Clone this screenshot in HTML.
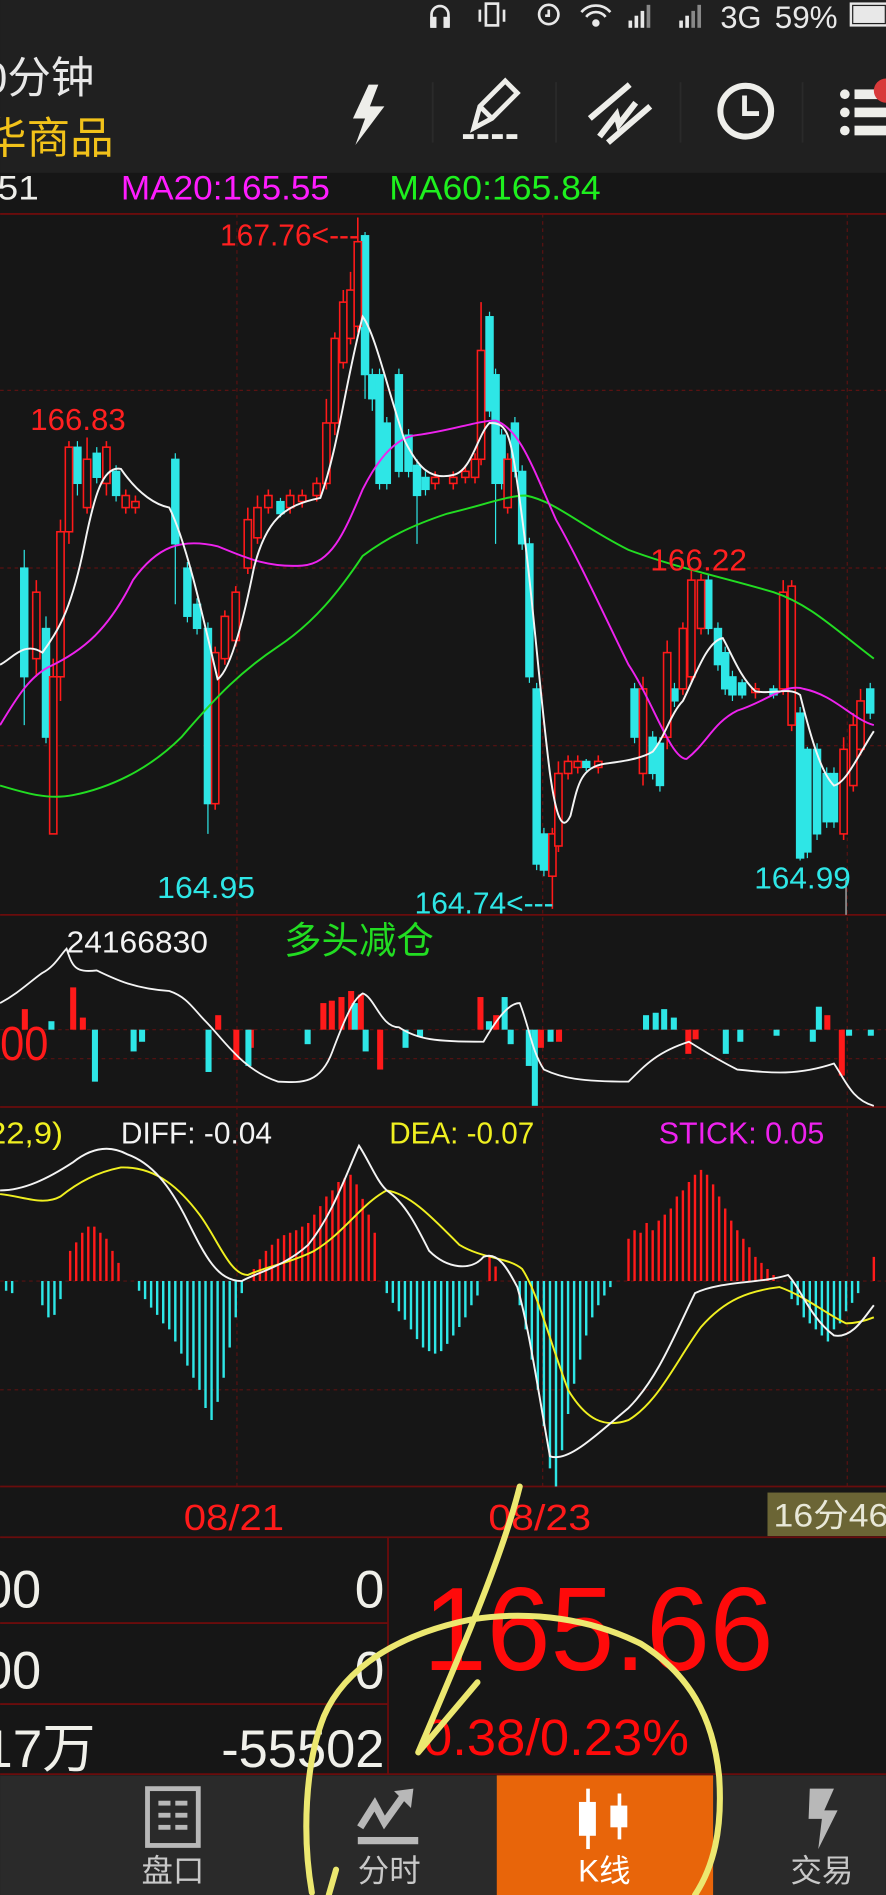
<!DOCTYPE html>
<html><head><meta charset="utf-8"><style>
html,body{margin:0;padding:0;background:#161616;width:886px;height:1895px;overflow:hidden}
svg{display:block}
text{font-family:"Liberation Sans","Noto Sans CJK SC",sans-serif}
</style></head><body>
<svg width="886" height="1895" viewBox="0 0 733 1568" xmlns="http://www.w3.org/2000/svg">
<rect x="0" y="0" width="733" height="1568" fill="#161616"/>
<rect x="0" y="0" width="733" height="143" fill="#202020"/>
<g fill="none" stroke="#e8e8e8" stroke-width="2.2">
<path d="M357 22 v-10 a7 7 0 0 1 14 0 v10"/><rect x="357" y="15" width="3" height="7" fill="#e8e8e8"/><rect x="368" y="15" width="3" height="7" fill="#e8e8e8"/>
<rect x="402" y="3" width="10" height="18"/><path d="M397 8 v10 M417 8 v10"/>
<circle cx="454" cy="12" r="8"/><path d="M454 8 v5 h-3"/>
<path d="M481 10 a16 16 0 0 1 24 0 M485 14 a10 10 0 0 1 16 0"/><circle cx="493" cy="19" r="2" fill="#e8e8e8"/>
</g>
<g fill="#e8e8e8"><rect x="520" y="17" width="3" height="6"/><rect x="525" y="13" width="3" height="10"/><rect x="530" y="9" width="3" height="14"/><rect x="535" y="4" width="3" height="19" fill="#888"/>
<rect x="562" y="17" width="3" height="6"/><rect x="567" y="13" width="3" height="10"/><rect x="572" y="9" width="3" height="14" fill="#888"/><rect x="577" y="4" width="3" height="19" fill="#888"/></g>
<text x="596" y="23" fill="#e8e8e8" font-size="26" textLength="34" lengthAdjust="spacingAndGlyphs">3G</text>
<text x="641" y="23" fill="#e8e8e8" font-size="26" textLength="52" lengthAdjust="spacingAndGlyphs">59%</text>
<rect x="704" y="3" width="30" height="18" fill="none" stroke="#e8e8e8" stroke-width="2"/><rect x="706" y="5" width="26" height="14" fill="#e8e8e8"/>
<text x="-14" y="77" fill="#e8e8e8" font-size="36">0分钟</text>
<text x="-14" y="127" fill="#f2c21a" font-size="36">华商品</text>
<path d="M305 70 L292 98 H302 L294 120 L318 88 H306 L313 70 Z" fill="#eeeeea"/>
<g stroke="#2a2a2a" stroke-width="1.5"><path d="M358 68 V118 M460 68 V118 M563 68 V118 M664 68 V118"/></g>
<g fill="none" stroke="#eeeeea" stroke-width="4">
<path d="M392 106 L397 88 L418 67 L428 77 L407 98 Z M397 88 L407 98"/>
</g>
<g fill="#eeeeea"><rect x="383" y="111" width="9" height="4"/><rect x="395" y="111" width="9" height="4"/><rect x="407" y="111" width="9" height="4"/><rect x="419" y="111" width="9" height="4"/></g>
<g fill="none" stroke="#eeeeea" stroke-width="5"><path d="M488 98 L521 70 M503 118 L538 88 M496 113 L510 95 L512 103 L526 85"/></g>
<circle cx="617" cy="92" r="21" fill="none" stroke="#eeeeea" stroke-width="5"/><path d="M616 79 V94 H628" fill="none" stroke="#eeeeea" stroke-width="4"/>
<g fill="#eeeeea"><circle cx="699" cy="78" r="4"/><circle cx="699" cy="93" r="4"/><circle cx="699" cy="108" r="4"/><rect x="707" y="74" width="30" height="8"/><rect x="707" y="89" width="30" height="8"/><rect x="707" y="104" width="30" height="8"/></g>
<circle cx="733" cy="75" r="10" fill="#d83a3a"/>
<text x="-2" y="165" fill="#eeeeea" font-size="28" textLength="34" lengthAdjust="spacingAndGlyphs">51</text>
<text x="100" y="165" fill="#ff1cff" font-size="28" textLength="173" lengthAdjust="spacingAndGlyphs">MA20:165.55</text>
<text x="322" y="165" fill="#1ef01e" font-size="28" textLength="175" lengthAdjust="spacingAndGlyphs">MA60:165.84</text>
<g stroke="#6a0c0c" stroke-width="1.5"><path d="M0 177 H733 M0 757 H733 M0 916 H733 M0 1230 H733 M0 1272 H733 M0 1468 H733 M321 1272 V1468 M0 1343 H321 M0 1410 H321"/></g>
<g stroke="#5a1212" stroke-width="1" stroke-dasharray="3 3"><path d="M196 177 V1230 M449 177 V1230 M701 177 V1230 M0 323 H733 M0 470 H733 M0 617 H733 M0 852 H733 M0 876 H733 M0 1060 H733 M0 1150 H733"/></g>
<g fill="#2ee6e6" stroke="#2ee6e6" stroke-width="1">
<path d="M20 455V600M38 510V615M64 365V410M80 370V400M96 385V415M145 375V500M155 465V515M163 495V525M172 515V690M232 412V428M302 192V330M308 305V340M314 305V405M320 345V405M330 305V395M338 355V395M345 380V450M352 390V410M405 258V345M410 305V450M415 355V405M426 345V395M432 385V455M438 445V565M444 565V720M450 685V725M485 628V638M525 565V615M540 605V645M546 610V655M558 565V585M586 475V525M594 515V555M600 535V575M606 555V580M614 562V578M640 567V578M662 585V712M668 618V710M676 615V695M684 635V685M690 635V685M720 565V595"/>
<rect x="17" y="470" width="6" height="90"/><rect x="35" y="520" width="6" height="90"/><rect x="61" y="370" width="6" height="30"/><rect x="77" y="375" width="6" height="20"/><rect x="93" y="390" width="6" height="20"/><rect x="142" y="380" width="6" height="70"/><rect x="152" y="470" width="6" height="40"/><rect x="160" y="500" width="6" height="20"/><rect x="169" y="520" width="6" height="145"/><rect x="229" y="415" width="6" height="10"/><rect x="299" y="195" width="6" height="115"/><rect x="305" y="310" width="6" height="20"/><rect x="311" y="310" width="6" height="90"/><rect x="317" y="350" width="6" height="50"/><rect x="327" y="310" width="6" height="80"/><rect x="335" y="360" width="6" height="30"/><rect x="342" y="385" width="6" height="25"/><rect x="349" y="395" width="6" height="10"/><rect x="402" y="262" width="6" height="78"/><rect x="407" y="310" width="6" height="90"/><rect x="412" y="360" width="6" height="40"/><rect x="423" y="350" width="6" height="40"/><rect x="429" y="390" width="6" height="60"/><rect x="435" y="450" width="6" height="110"/><rect x="441" y="570" width="6" height="145"/><rect x="447" y="690" width="6" height="30"/><rect x="482" y="630" width="6" height="5"/><rect x="522" y="570" width="6" height="40"/><rect x="537" y="610" width="6" height="30"/><rect x="543" y="615" width="6" height="35"/><rect x="555" y="570" width="6" height="10"/><rect x="583" y="480" width="6" height="40"/><rect x="591" y="520" width="6" height="30"/><rect x="597" y="540" width="6" height="30"/><rect x="603" y="560" width="6" height="15"/><rect x="611" y="565" width="6" height="10"/><rect x="637" y="570" width="6" height="5"/><rect x="659" y="590" width="6" height="120"/><rect x="665" y="620" width="6" height="85"/><rect x="673" y="620" width="6" height="70"/><rect x="681" y="640" width="6" height="40"/><rect x="687" y="640" width="6" height="40"/><rect x="717" y="570" width="6" height="20"/>
</g>
<g fill="#161616" stroke="#ff1a1a" stroke-width="1.3">
<path d="M30 480V560M44 545V690M50 430V580M57 365V450M72 362V425M88 365V410M104 405V425M112 410V425M178 535V670M186 505V550M195 485V535M205 420V475M213 410V450M222 405V425M240 405V425M250 405V420M262 395V415M270 330V405M277 275V360M284 240V305M290 225V285M296 180V275M360 390V405M375 390V405M385 385V400M393 375V400M398 250V385M420 375V425M457 685V752M462 630V705M470 625V645M478 625V640M495 625V640M532 560V650M552 530V620M565 515V575M572 470V565M580 475V525M625 565V578M648 480V575M655 480V605M698 610V695M706 590V655M712 570V625"/>
<rect x="27" y="490" width="6" height="55"/><rect x="41" y="560" width="6" height="130"/><rect x="47" y="440" width="6" height="120"/><rect x="54" y="370" width="6" height="70"/><rect x="69" y="380" width="6" height="40"/><rect x="85" y="370" width="6" height="30"/><rect x="101" y="410" width="6" height="10"/><rect x="109" y="415" width="6" height="5"/><rect x="175" y="540" width="6" height="125"/><rect x="183" y="510" width="6" height="35"/><rect x="192" y="490" width="6" height="40"/><rect x="202" y="430" width="6" height="40"/><rect x="210" y="420" width="6" height="25"/><rect x="219" y="410" width="6" height="10"/><rect x="237" y="410" width="6" height="10"/><rect x="247" y="410" width="6" height="5"/><rect x="259" y="400" width="6" height="10"/><rect x="267" y="350" width="6" height="50"/><rect x="274" y="280" width="6" height="70"/><rect x="281" y="250" width="6" height="50"/><rect x="287" y="240" width="6" height="40"/><rect x="293" y="200" width="6" height="70"/><rect x="357" y="395" width="6" height="5"/><rect x="372" y="395" width="6" height="5"/><rect x="382" y="390" width="6" height="5"/><rect x="390" y="380" width="6" height="15"/><rect x="395" y="290" width="6" height="90"/><rect x="417" y="380" width="6" height="40"/><rect x="454" y="690" width="6" height="35"/><rect x="459" y="640" width="6" height="60"/><rect x="467" y="630" width="6" height="10"/><rect x="475" y="630" width="6" height="5"/><rect x="492" y="630" width="6" height="5"/><rect x="529" y="570" width="6" height="70"/><rect x="549" y="540" width="6" height="70"/><rect x="562" y="520" width="6" height="50"/><rect x="569" y="480" width="6" height="80"/><rect x="577" y="480" width="6" height="40"/><rect x="622" y="570" width="6" height="3"/><rect x="645" y="490" width="6" height="80"/><rect x="652" y="485" width="6" height="115"/><rect x="695" y="620" width="6" height="70"/><rect x="703" y="600" width="6" height="50"/><rect x="709" y="580" width="6" height="40"/>
</g>
<path d="M700 728 V757" stroke="#888" stroke-width="1.5"/>
<g fill="none" stroke-width="1.6">
<path stroke="#22dd22" d="M0 650 C20 656 40 662 60 658 C100 650 130 630 150 610 C180 575 200 555 230 535 C260 515 280 490 300 460 C320 445 340 435 370 425 C400 418 420 410 435 410 C460 415 480 435 520 455 C560 470 600 478 640 490 C670 500 690 520 723 545"/>
<path stroke="#ee22ee" d="M0 600 C15 575 25 560 40 552 C70 538 90 520 110 480 C130 452 150 445 180 452 C200 460 220 470 250 468 C275 466 285 440 300 405 C310 385 325 362 345 360 C375 356 395 348 410 348 C430 355 440 385 460 430 C480 465 505 520 520 550 C540 580 555 628 568 628 C585 615 590 598 610 588 C635 580 650 565 665 570 C690 575 705 595 723 600"/>
<path stroke="#f4f4f4" d="M0 550 C10 545 20 530 35 540 C50 520 60 500 70 450 C78 410 85 385 100 388 C115 410 130 418 140 420 C155 450 170 520 180 562 C190 555 200 520 210 470 C220 430 235 418 265 412 C280 370 285 320 300 262 C310 275 320 320 335 365 C345 385 355 398 375 393 C390 390 395 360 405 350 C418 350 422 355 428 400 C440 480 445 560 455 640 C460 675 465 690 472 675 C478 650 480 635 500 632 C515 630 530 628 540 622 C550 610 555 590 565 580 C575 560 585 530 598 528 C605 540 612 560 625 572 C640 575 652 568 662 575 C672 615 680 640 690 650 C700 648 710 625 723 605"/>
</g>
<g font-size="25" lengthAdjust="spacingAndGlyphs">
<text x="182" y="203" fill="#ff2020" textLength="115" lengthAdjust="spacingAndGlyphs">167.76&lt;---</text>
<text x="25" y="356" fill="#ff2020" textLength="79" lengthAdjust="spacingAndGlyphs">166.83</text>
<text x="538" y="472" fill="#ff2020" textLength="80" lengthAdjust="spacingAndGlyphs">166.22</text>
<text x="130" y="743" fill="#2ee6e6" textLength="81" lengthAdjust="spacingAndGlyphs">164.95</text>
<text x="343" y="756" fill="#2ee6e6" textLength="115" lengthAdjust="spacingAndGlyphs">164.74&lt;---</text>
<text x="624" y="735" fill="#2ee6e6" textLength="80" lengthAdjust="spacingAndGlyphs">164.99</text>
</g>
<text x="55" y="788" fill="#f4f4f4" font-size="25" textLength="117" lengthAdjust="spacingAndGlyphs">24166830</text>
<text x="235" y="789" fill="#22dd22" font-size="31">多头减仓</text>
<text x="-20" y="877" fill="#ff1a1a" font-size="40" textLength="60" lengthAdjust="spacingAndGlyphs">000</text>
<g fill="#ff1a1a"><rect x="18" y="835" width="5" height="17"/><rect x="58" y="817" width="5" height="35"/><rect x="66" y="842" width="5" height="10"/><rect x="178" y="840" width="5" height="12"/><rect x="193" y="852" width="5" height="25"/><rect x="205" y="852" width="5" height="15"/><rect x="265" y="830" width="5" height="22"/><rect x="272" y="828" width="5" height="24"/><rect x="280" y="825" width="5" height="27"/><rect x="288" y="820" width="5" height="32"/><rect x="296" y="823" width="5" height="29"/><rect x="312" y="852" width="5" height="33"/><rect x="395" y="825" width="5" height="27"/><rect x="408" y="840" width="5" height="12"/><rect x="445" y="852" width="5" height="15"/><rect x="460" y="852" width="5" height="10"/><rect x="567" y="852" width="5" height="20"/><rect x="573" y="852" width="5" height="8"/><rect x="682" y="840" width="5" height="12"/><rect x="694" y="852" width="5" height="38"/></g>
<g fill="#2ee6e6"><rect x="40" y="845" width="5" height="7"/><rect x="76" y="852" width="5" height="43"/><rect x="108" y="852" width="5" height="18"/><rect x="115" y="852" width="5" height="10"/><rect x="170" y="852" width="5" height="35"/><rect x="203" y="852" width="5" height="30"/><rect x="252" y="852" width="5" height="12"/><rect x="291" y="830" width="5" height="22"/><rect x="300" y="852" width="5" height="18"/><rect x="333" y="852" width="5" height="15"/><rect x="345" y="852" width="5" height="6"/><rect x="402" y="845" width="5" height="7"/><rect x="415" y="825" width="5" height="27"/><rect x="420" y="852" width="5" height="12"/><rect x="435" y="852" width="5" height="30"/><rect x="440" y="852" width="5" height="63"/><rect x="453" y="852" width="5" height="10"/><rect x="532" y="840" width="5" height="12"/><rect x="540" y="838" width="5" height="14"/><rect x="547" y="835" width="5" height="17"/><rect x="555" y="842" width="5" height="10"/><rect x="598" y="852" width="5" height="20"/><rect x="610" y="852" width="5" height="10"/><rect x="640" y="852" width="5" height="5"/><rect x="670" y="852" width="5" height="10"/><rect x="675" y="833" width="5" height="19"/><rect x="700" y="852" width="5" height="5"/><rect x="718" y="852" width="5" height="5"/></g>
<path fill="none" stroke="#f4f4f4" stroke-width="1.5" d="M0 830 C15 822 25 812 35 805 C45 800 50 790 55 785 C60 800 62 805 80 803 C95 810 110 818 140 820 C155 825 160 835 170 845 C185 860 200 885 230 895 C250 896 265 897 275 870 C290 830 295 825 300 822 C310 825 315 850 330 850 C345 860 360 862 400 862 C410 845 420 830 430 830 C438 850 440 870 450 885 C465 892 480 895 520 895 C535 880 545 870 570 862 C580 868 590 875 610 885 C640 888 660 890 690 880 C700 895 705 910 723 915"/>
<g font-size="25">
<text x="-10" y="946" fill="#f0f020" textLength="62" lengthAdjust="spacingAndGlyphs">22,9)</text>
<text x="100" y="946" fill="#f4f4f4" textLength="125" lengthAdjust="spacingAndGlyphs">DIFF: -0.04</text>
<text x="322" y="946" fill="#f0f020" textLength="120" lengthAdjust="spacingAndGlyphs">DEA: -0.07</text>
<text x="545" y="946" fill="#ee22ee" textLength="137" lengthAdjust="spacingAndGlyphs">STICK: 0.05</text></g>
<g stroke="#ff1a1a" stroke-width="2">
<path d="M58 1060V1035M63 1060V1028M68 1060V1020M73 1060V1015M78 1060V1015M83 1060V1020M88 1060V1025M93 1060V1035M98 1060V1045M210 1060V1050M215 1060V1042M220 1060V1035M225 1060V1030M230 1060V1025M235 1060V1022M240 1060V1020M245 1060V1018M250 1060V1015M255 1060V1012M260 1060V1005M265 1060V998M270 1060V990M275 1060V985M280 1060V978M285 1060V975M290 1060V972M295 1060V980M300 1060V992M305 1060V1005M310 1060V1020M405 1060V1040M410 1060V1048M520 1060V1025M525 1060V1018M530 1060V1020M535 1060V1012M540 1060V1018M545 1060V1010M550 1060V1005M555 1060V1000M560 1060V990M565 1060V985M570 1060V978M575 1060V972M580 1060V968M585 1060V972M590 1060V980M595 1060V990M600 1060V1000M605 1060V1010M610 1060V1018M615 1060V1025M620 1060V1032M625 1060V1040M630 1060V1045M635 1060V1050M640 1060V1055M723 1060V1040"/>
</g>
<g stroke="#2ee6e6" stroke-width="2">
<path d="M5 1060V1068M10 1060V1070M35 1060V1080M40 1060V1090M45 1060V1088M50 1060V1075M115 1060V1068M120 1060V1075M125 1060V1082M130 1060V1088M135 1060V1095M140 1060V1100M145 1060V1110M150 1060V1120M155 1060V1130M160 1060V1140M165 1060V1150M170 1060V1165M175 1060V1175M180 1060V1160M185 1060V1140M190 1060V1115M195 1060V1090M200 1060V1070M320 1060V1070M325 1060V1078M330 1060V1085M335 1060V1092M340 1060V1100M345 1060V1108M350 1060V1115M355 1060V1118M360 1060V1120M365 1060V1118M370 1060V1112M375 1060V1105M380 1060V1098M385 1060V1090M390 1060V1080M395 1060V1072M430 1060V1080M435 1060V1100M440 1060V1125M445 1060V1150M450 1060V1180M455 1060V1215M460 1060V1230M465 1060V1200M470 1060V1170M475 1060V1145M480 1060V1125M485 1060V1105M490 1060V1090M495 1060V1080M500 1060V1072M505 1060V1065M655 1060V1075M660 1060V1080M665 1060V1090M670 1060V1095M675 1060V1100M680 1060V1105M685 1060V1110M690 1060V1100M695 1060V1095M700 1060V1085M705 1060V1078M710 1060V1070"/>
</g>
<path fill="none" stroke="#f0f020" stroke-width="1.6" d="M0 988 C20 990 35 998 50 990 C65 978 80 970 100 966 C130 965 150 985 165 1005 C180 1025 190 1055 205 1055 C220 1048 240 1045 260 1035 C285 1020 300 995 320 985 C340 988 360 1010 380 1030 C400 1042 420 1040 432 1050 C445 1070 455 1110 470 1150 C485 1175 500 1182 520 1175 C545 1160 560 1125 580 1098 C600 1075 620 1068 645 1065 C665 1072 685 1088 700 1095 C710 1095 718 1092 723 1090"/>
<path fill="none" stroke="#f4f4f4" stroke-width="1.6" d="M0 985 C20 985 40 975 60 962 C75 950 90 947 105 955 C125 962 140 980 155 1010 C170 1040 180 1060 200 1060 C215 1052 235 1048 255 1030 C275 1005 285 975 297 948 C305 960 312 978 320 985 C335 995 345 1015 355 1035 C370 1050 390 1052 400 1040 C412 1035 420 1050 428 1065 C438 1100 445 1150 455 1205 C470 1210 490 1190 520 1165 C545 1140 560 1100 575 1070 C595 1060 630 1062 652 1055 C662 1065 670 1090 690 1105 C705 1108 715 1090 723 1080"/>
<text x="152" y="1266" fill="#ff1a1a" font-size="30" textLength="83" lengthAdjust="spacingAndGlyphs">08/21</text>
<text x="404" y="1266" fill="#ff1a1a" font-size="30" textLength="85" lengthAdjust="spacingAndGlyphs">08/23</text>
<rect x="635" y="1235" width="100" height="36" fill="#6b6535"/>
<text x="640" y="1263" fill="#e8e8d8" font-size="27" textLength="95" lengthAdjust="spacingAndGlyphs">16分46</text>
<g fill="#f0f0ea" font-size="44">
<text x="-14" y="1330" textLength="48" lengthAdjust="spacingAndGlyphs">00</text><text x="318" y="1330" text-anchor="end">0</text>
<text x="-14" y="1397" textLength="48" lengthAdjust="spacingAndGlyphs">00</text><text x="318" y="1397" text-anchor="end">0</text>
<text x="-14" y="1462">17万</text><text x="183" y="1462" textLength="135" lengthAdjust="spacingAndGlyphs">-55502</text>
</g>
<text x="350" y="1382" fill="#ff0a0a" font-size="98" textLength="290" lengthAdjust="spacingAndGlyphs">165.66</text>
<text x="350" y="1452" fill="#ff0a0a" font-size="42" textLength="220" lengthAdjust="spacingAndGlyphs">0.38/0.23%</text>
<rect x="0" y="1469" width="733" height="99" fill="#2a2a2a"/>
<rect x="411" y="1469" width="179" height="99" fill="#e8650a"/>
<rect x="122" y="1480" width="42" height="47" fill="none" stroke="#b8b8b8" stroke-width="4"/>
<g fill="#b8b8b8"><rect x="131" y="1490" width="10" height="4"/><rect x="145" y="1490" width="10" height="4"/><rect x="131" y="1500" width="10" height="4"/><rect x="145" y="1500" width="10" height="4"/><rect x="131" y="1510" width="10" height="4"/><rect x="145" y="1510" width="10" height="4"/></g>
<path d="M298 1512 L310 1493 L318 1508 L333 1487" fill="none" stroke="#b8b8b8" stroke-width="6"/><path d="M326 1482 L342 1480 L340 1496 Z" fill="#b8b8b8"/><rect x="296" y="1520" width="50" height="6" fill="#b8b8b8"/>
<g fill="#ffffff"><rect x="485" y="1480" width="3" height="50"/><rect x="479" y="1491" width="14" height="28"/><rect x="511" y="1484" width="3" height="38"/><rect x="505" y="1494" width="14" height="18"/></g>
<path d="M670 1480 L690 1480 L682 1498 L693 1498 L677 1530 L680 1505 L669 1505 Z" fill="#b8b8b8"/>
<g font-size="26"><text x="143" y="1557" fill="#c8c8c8" text-anchor="middle">盘口</text><text x="322" y="1557" fill="#c8c8c8" text-anchor="middle">分时</text><text x="500" y="1557" fill="#ffffff" text-anchor="middle">K线</text><text x="680" y="1557" fill="#c8c8c8" text-anchor="middle">交易</text></g>
<g fill="none" stroke="#ece870" stroke-width="5" stroke-linecap="round" stroke-linejoin="round">
<path d="M430 1230 C415 1290 380 1370 346 1450 L395 1392"/>
<path d="M258 1566 C250 1520 252 1460 268 1420 C285 1380 330 1352 390 1340 C440 1332 490 1340 530 1360 C570 1385 590 1420 595 1470 C598 1515 590 1545 575 1568"/>
<path d="M278 1547 L272 1568"/>
</g>
</svg>
</body></html>
